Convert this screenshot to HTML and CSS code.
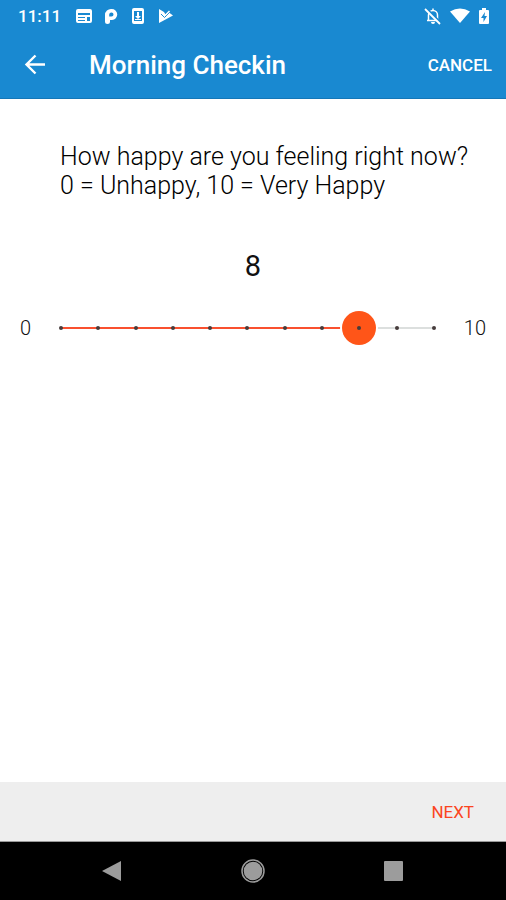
FILE: index.html
```
<!DOCTYPE html>
<html lang="en">
<head>
    <meta charset="UTF-8">
    <meta name="viewport" content="width=device-width, initial-scale=1.0">
    <title>Morning Checkin</title>
    <link rel="stylesheet" href="styles.css">
</head>
<body>
    <header class="header">
        <div class="status-bar">
            <span class="clock">11:11</span>
            <svg class="status-icon" width="18" height="18" viewBox="0 0 18 18">
                <path fill="#fff" fill-rule="evenodd" d="M3 2h12a2 2 0 0 1 2 2v10a2 2 0 0 1-2 2H3a2 2 0 0 1-2-2V4a2 2 0 0 1 2-2zM3 6v2h12V6zM3 10v1h7v-1zM3 13v1h7v-1zM12 10v4h3v-4z"/>
            </svg>
            <svg class="status-icon" width="18" height="18" viewBox="0 0 18 18">
                <path fill="#fff" fill-rule="evenodd" d="M9.500 2A5.500 5.500 0 0 1 10 13H8v1.500a2.500 2.500 0 0 1-5 0V8a6 6 0 0 1 6.500-6zM9.500 5.500A2.200 2.200 0 0 0 7.200 7.500v2h2.300a2 2 0 0 0 0-4z"/>
            </svg>
            <svg class="status-icon" width="18" height="18" viewBox="0 0 18 18">
                <path fill="#fff" fill-rule="evenodd" d="M5 1h8a2 2 0 0 1 2 2v12a2 2 0 0 1-2 2H5a2 2 0 0 1-2-2V3a2 2 0 0 1 2-2zM5 4v10h8V4z"/>
                <path fill="#fff" d="M8 5h2v4h2l-3 3-3-3h2zM6 12h6v1H6z"/>
            </svg>
            <svg class="status-icon" width="18" height="18" viewBox="0 0 18 18">
                <path fill="#fff" d="M3 2l5 3 1.500 2.500L13 5.500l4 3L3 16z"/>
                <path fill="none" stroke="#1989d1" stroke-width="1" d="M5 7l3.500 3.500L14 5"/>
                <path fill="none" stroke="#fff" stroke-width="1.500" d="M9 8.500l4.500-4.500"/>
            </svg>
            <svg class="status-icon status-right" width="18" height="18" viewBox="0 0 18 18">
                <path fill="none" stroke="#fff" stroke-width="1.500" d="M3 13.500h12M4.500 13V8a4.500 4.500 0 0 1 9 0v5M9 1.500V4"/>
                <path fill="#fff" d="M7 15h4a2 2 0 0 1-4 0z"/>
                <path stroke="#1989d1" stroke-width="2" d="M2.500 1.500l15 15"/>
                <path stroke="#fff" stroke-width="1.800" d="M1 2l15 15"/>
            </svg>
            <svg class="status-icon" width="20" height="18" viewBox="0 0 20 18">
                <path fill="#fff" d="M0 4.500Q10-1.500 20 4.500L10 16z"/>
            </svg>
            <svg class="status-icon" width="12" height="18" viewBox="0 0 12 18">
                <path fill="#fff" d="M4 1h4v2h2a1 1 0 0 1 1 1v12a1 1 0 0 1-1 1H2a1 1 0 0 1-1-1V4a1 1 0 0 1 1-1h2z"/>
                <path fill="#1989d1" d="M7 5L3 11h2.500v4L9 9H6.500z"/>
            </svg>
        </div>
        <div class="app-bar">
            <button class="back-button" aria-label="Back">
                <svg width="22" height="22" viewBox="0 0 22 22">
                    <path fill="none" stroke="#fff" stroke-width="2.400" d="M21 10.500H3M11.500 1.500L2.500 10.500l9 9"/>
                </svg>
            </button>
            <h1>Morning Checkin</h1>
            <button class="cancel-button">CANCEL</button>
        </div>
    </header>

    <main>
        <label class="question" for="happiness">How happy are you feeling right now?<br>0 = Unhappy, 10 = Very Happy</label>
        <output class="value" id="value" for="happiness">8</output>
        <div class="slider-row">
            <span>0</span>
            <div class="slider">
                <input type="range" id="happiness" min="0" max="10" value="8">
                <div class="ticks">
                    <i></i><i></i><i></i><i></i><i></i><i></i><i></i><i></i><i></i><i></i><i></i>
                </div>
            </div>
            <span class="max">10</span>
        </div>
    </main>

    <footer class="footer">
        <button class="next-button">NEXT</button>
    </footer>

    <nav class="nav-bar">
        <button aria-label="Back">
            <svg width="24" height="24" viewBox="0 0 24 24"><path fill="#9c9c9c" d="M21 2v20L2 12z"/></svg>
        </button>
        <button aria-label="Home">
            <svg width="24" height="24" viewBox="0 0 24 24">
                <circle cx="12" cy="12" r="11" fill="none" stroke="#9c9c9c" stroke-width="1.500"/>
                <circle cx="12" cy="12" r="9.300" fill="#9c9c9c"/>
            </svg>
        </button>
        <button aria-label="Recent apps">
            <svg width="24" height="24" viewBox="0 0 24 24"><rect x="2" y="2" width="19" height="20" rx="1" fill="#9c9c9c"/></svg>
        </button>
    </nav>

    <script src="script.js"></script>
</body>
</html>
```
FILE: styles.css
```
* {
    box-sizing: border-box;
}

body {
    display: flex;
    flex-direction: column;
    min-height: 100vh;
    margin: 0;
    background: #fff;
    color: #111;
    font-family: Roboto, sans-serif;
}

button {
    padding: 0;
    border: none;
    background: none;
    font-family: inherit;
    cursor: pointer;
}

svg {
    display: block;
}

.header {
    background: #1989d1;
    color: #fff;
    border-bottom: 1px solid #1477b8;
}

/* status bar */
.status-bar {
    display: flex;
    align-items: center;
    gap: 9px;
    height: 32px;
    padding: 0 16px 0 18px;
}

.clock {
    margin-right: 5px;
    font-size: 17px;
    font-weight: 500;
}

.status-right {
    margin-left: auto;
}

.status-right ~ .status-icon {
    margin-left: -1px;
}

/* app bar */
.app-bar {
    display: flex;
    align-items: center;
    height: 66px;
    padding: 0 14px 0 24px;
}

.app-bar h1 {
    flex: 1;
    margin: 0 0 0 43px;
    font-size: 26px;
    font-weight: 500;
}

.cancel-button {
    color: #fff;
    font-size: 17px;
    font-weight: 500;
}

/* question */
main {
    flex: 1;
    display: flex;
    flex-direction: column;
    padding: 43px 20px 0;
}

.question {
    margin-left: 40px;
    color: #000;
    font-size: 25px;
    font-weight: 300;
    line-height: 29px;
}

.value {
    margin-top: 48px;
    font-size: 29px;
    line-height: 36px;
    text-align: center;
}

.slider-row {
    display: grid;
    grid-template-columns: 24px 1fr 35px;
    align-items: center;
    margin-top: 26px;
    font-size: 20px;
    font-weight: 300;
}

.max {
    text-align: right;
}

.slider {
    position: relative;
}

.slider input {
    display: block;
    width: 100%;
    height: 36px;
    margin: 0;
    appearance: none;
    /* track runs between the centres of the two end ticks */
    background: linear-gradient(to right, #f9502f 80%, #dcdfde 80%) center / calc(100% - 34px) 2px no-repeat;
    cursor: pointer;
}

.slider input::-webkit-slider-thumb {
    appearance: none;
    width: 34px;
    height: 34px;
    border-radius: 50%;
    background: #ff5518;
    box-shadow: 0 0 0 2px #fff;
}

.ticks {
    position: absolute;
    inset: 0 15px;
    display: flex;
    align-items: center;
    justify-content: space-between;
    pointer-events: none;
}

.ticks i {
    width: 4px;
    height: 4px;
    border-radius: 50%;
    background: #463c3c;
}

/* bottom bars */
.footer {
    display: flex;
    align-items: center;
    justify-content: flex-end;
    height: 60px;
    padding: 0 32px;
    background: #eee;
    border-bottom: 1px solid #999;
}

.next-button {
    color: #fb4420;
    font-size: 17px;
}

.nav-bar {
    display: grid;
    grid-template-columns: repeat(3, 1fr);
    place-items: center;
    height: 58px;
    padding: 0 42px;
    background: #000;
}
```
FILE: script.js
```
const slider = document.getElementById("happiness");
const value = document.getElementById("value");

slider.addEventListener("input", () => {
    const percent = slider.value * 10;
    value.textContent = slider.value;
    slider.style.backgroundImage = `linear-gradient(to right, #f9502f ${percent}%, #dcdfde ${percent}%)`;
});
```
